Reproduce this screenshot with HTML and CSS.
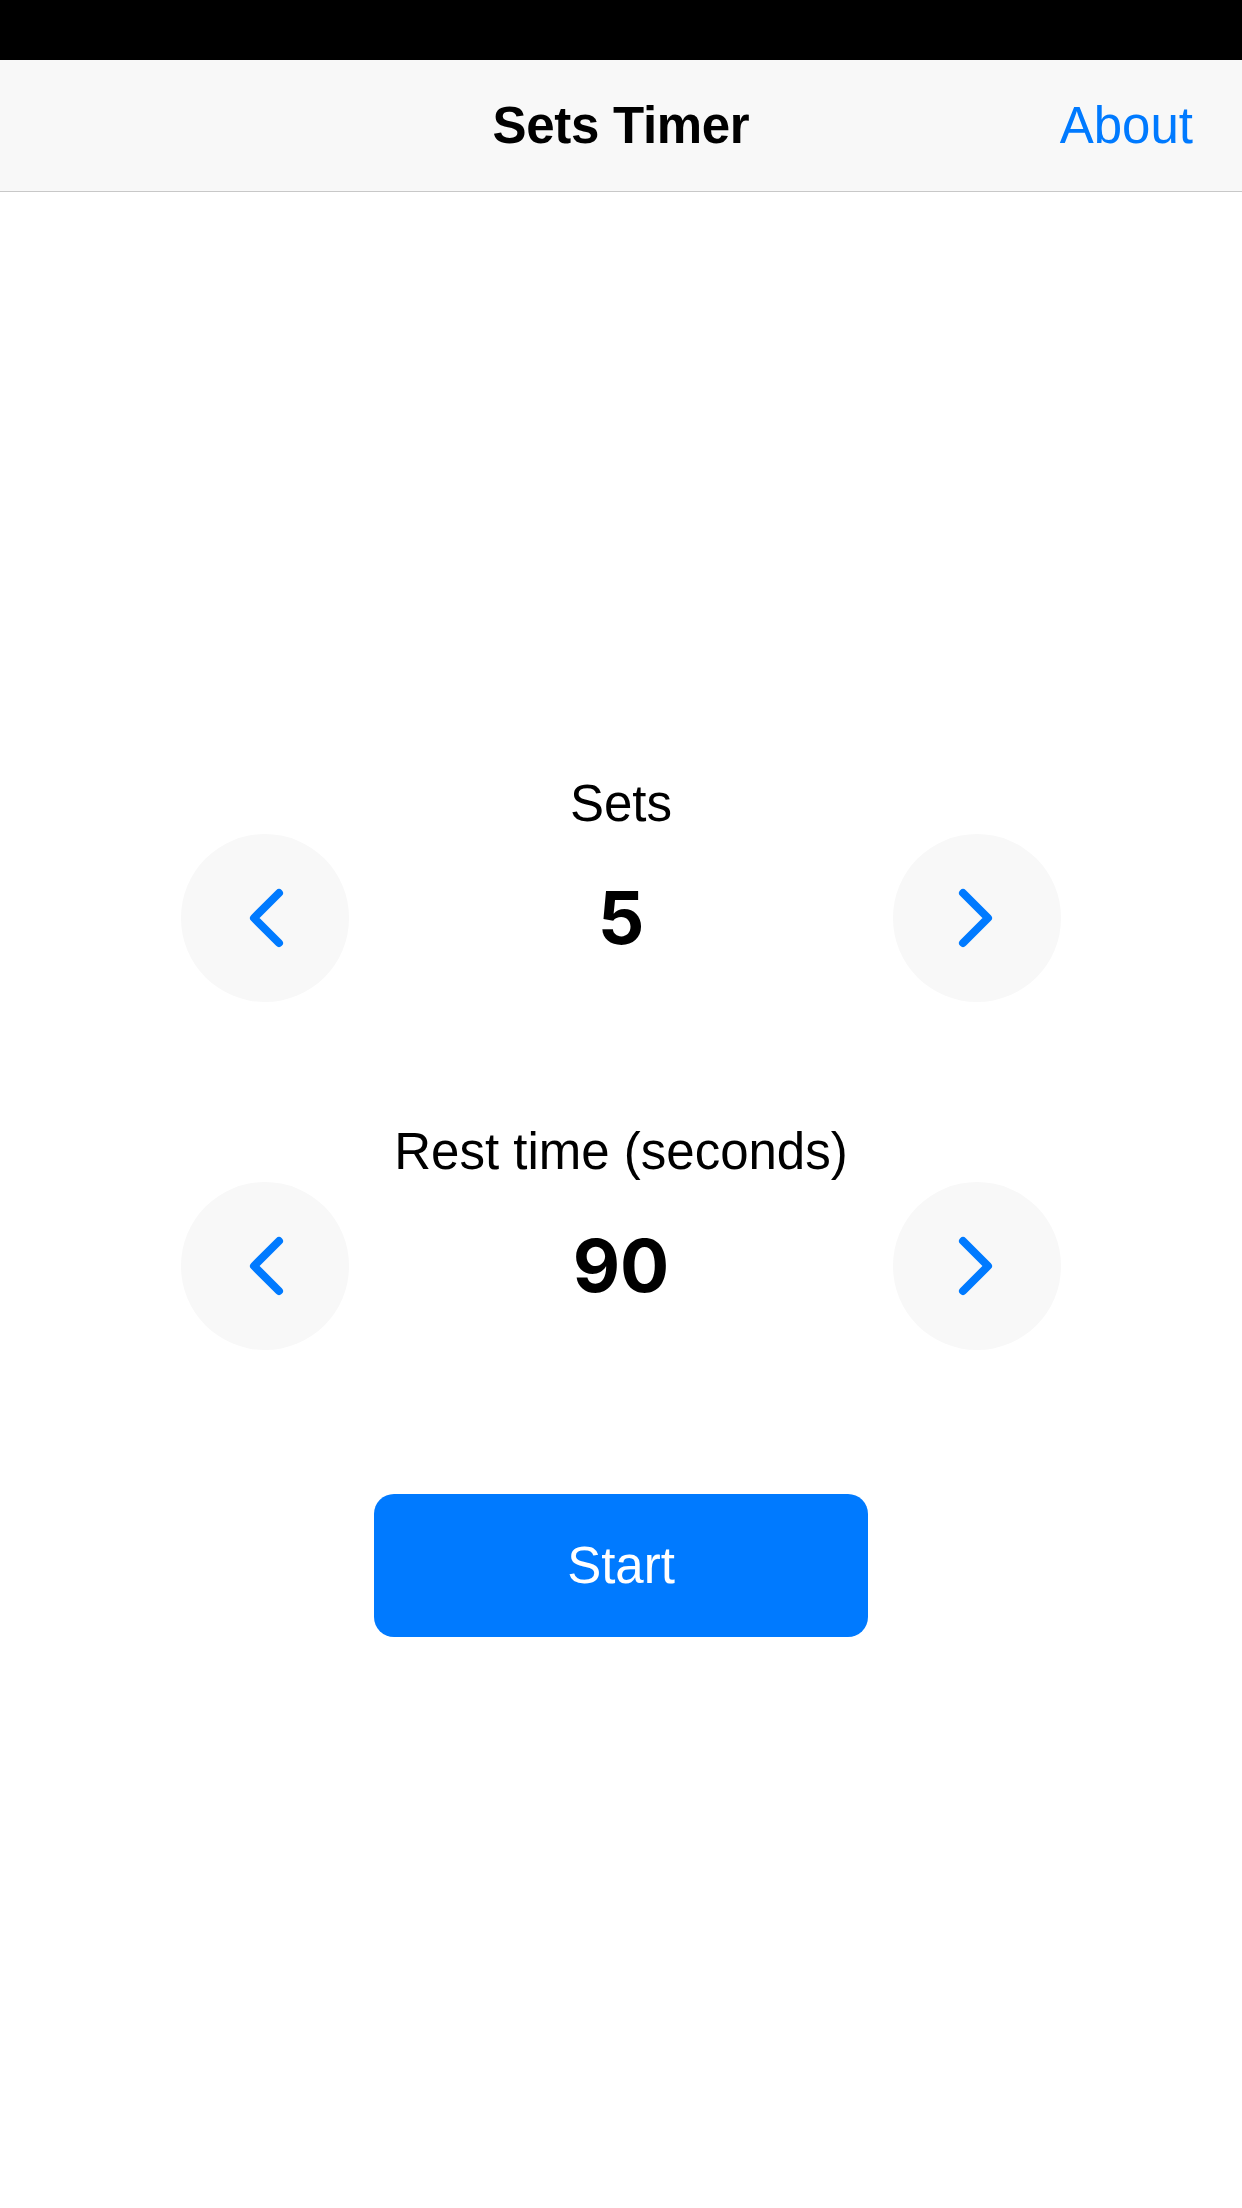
FILE: index.html
```html
<!DOCTYPE html>
<html lang="en">
<head>
<meta charset="utf-8">
<title>Sets Timer</title>
<link rel="stylesheet" href="styles.css">
</head>
<body>
<div class="status"></div>
<header class="nav">
  <div class="nav-side"></div>
  <h1 class="nav-title">Sets Timer</h1>
  <div class="nav-side nav-right"><a class="nav-link">About</a></div>
</header>
<main class="content">
  <section class="field">
    <div class="label">Sets</div>
    <div class="stepper">
      <button class="circle" aria-label="Decrease sets">
        <svg width="40" height="60" viewBox="0 0 40 60"><path d="M34 5 L9 30 L34 55" fill="none" stroke="#007aff" stroke-width="8" stroke-linecap="round" stroke-linejoin="round"/></svg>
      </button>
      <div class="value">5</div>
      <button class="circle" aria-label="Increase sets">
        <svg width="40" height="60" viewBox="0 0 40 60"><path d="M6 5 L31 30 L6 55" fill="none" stroke="#007aff" stroke-width="8" stroke-linecap="round" stroke-linejoin="round"/></svg>
      </button>
    </div>
  </section>
  <section class="field field-second">
    <div class="label">Rest time (seconds)</div>
    <div class="stepper">
      <button class="circle" aria-label="Decrease rest time">
        <svg width="40" height="60" viewBox="0 0 40 60"><path d="M34 5 L9 30 L34 55" fill="none" stroke="#007aff" stroke-width="8" stroke-linecap="round" stroke-linejoin="round"/></svg>
      </button>
      <div class="value">90</div>
      <button class="circle" aria-label="Increase rest time">
        <svg width="40" height="60" viewBox="0 0 40 60"><path d="M6 5 L31 30 L6 55" fill="none" stroke="#007aff" stroke-width="8" stroke-linecap="round" stroke-linejoin="round"/></svg>
      </button>
    </div>
  </section>
  <button class="start">Start</button>
</main>
</body>
</html>
```

FILE: styles.css
```css
* { box-sizing: border-box; }
html, body {
  margin: 0;
  padding: 0;
  background: #ffffff;
}
body {
  width: 1242px;
  height: 2208px;
  font-family: "Liberation Sans", Arial, sans-serif;
  color: #000;
  overflow: hidden;
}
.status {
  height: 60px;
  background: #000;
}
.nav {
  height: 132px;
  background: #f8f8f8;
  border-bottom: 1px solid #c8c8c8;
  display: grid;
  grid-template-columns: 1fr auto 1fr;
  align-items: center;
  padding: 0 49px;
}
.nav-title {
  margin: 0;
  font-size: 51px;
  font-weight: 700;
  letter-spacing: -0.3px;
  line-height: 1;
}
.nav-right {
  display: flex;
  justify-content: flex-end;
}
.nav-link {
  color: #007aff;
  font-size: 51px;
  line-height: 1;
}
.content {
  display: flex;
  flex-direction: column;
  align-items: center;
  padding-top: 582px;
}
.field {
  display: flex;
  flex-direction: column;
  align-items: center;
  width: 880px;
}
.field-second {
  margin-top: 120px;
}
.label {
  font-size: 51px;
  line-height: 60px;
  height: 60px;
}
.stepper {
  width: 880px;
  display: flex;
  justify-content: space-between;
  align-items: center;
}
.circle {
  width: 168px;
  height: 168px;
  border-radius: 50%;
  border: none;
  background: #f8f8f8;
  padding: 0;
  display: flex;
  align-items: center;
  justify-content: center;
}
.value {
  font-family: "Inter", "Liberation Sans", sans-serif;
  font-weight: 700;
  font-size: 73px;
  line-height: 76px;
}
.start {
  margin-top: 144px;
  width: 494px;
  height: 143px;
  border: none;
  border-radius: 20px;
  background: #007aff;
  color: #fff;
  font-family: "Liberation Sans", Arial, sans-serif;
  font-size: 51px;
}
```
